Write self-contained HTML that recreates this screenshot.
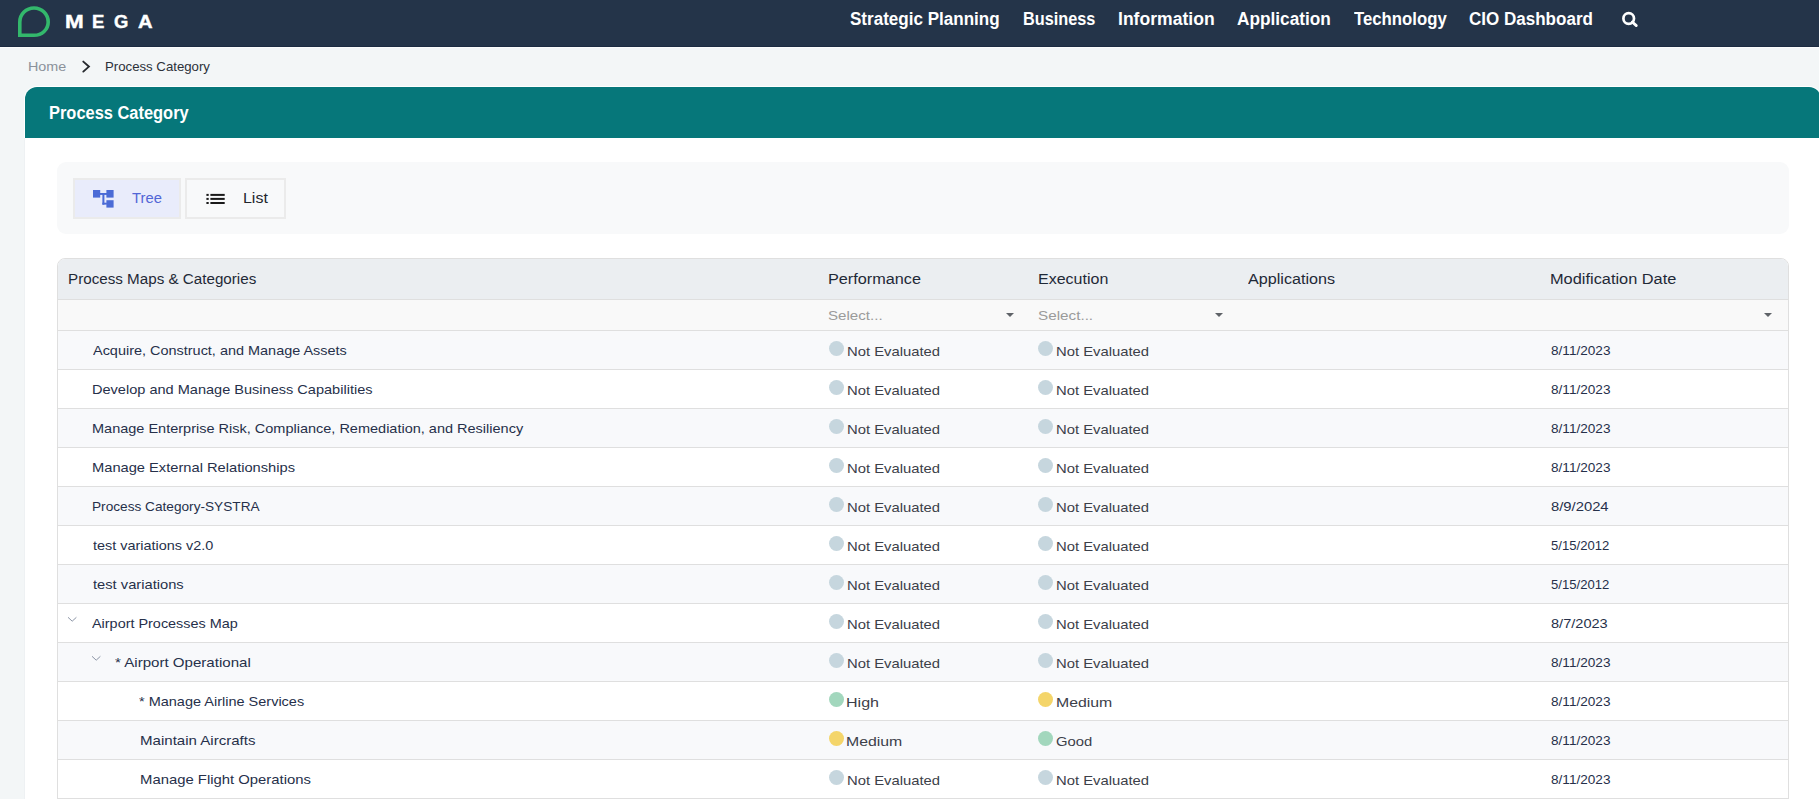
<!DOCTYPE html>
<html><head><meta charset="utf-8">
<style>
*{box-sizing:border-box;margin:0;padding:0}
html,body{width:1819px;height:799px;overflow:hidden;background:#f3f6f7;font-family:"Liberation Sans",sans-serif}
body{position:relative}
.t{position:absolute;white-space:nowrap;transform-origin:0 0}
#nav{position:absolute;left:0;top:0;width:1819px;height:46px;background:#243449}
#navl{position:absolute;left:0;top:46px;width:1819px;height:1px;background:#1c2b41}
#navw{position:absolute;left:0;top:47px;width:1819px;height:1px;background:#fbfcfc}
#card{position:absolute;left:24px;top:86px;width:1798px;height:760px;background:#fff;border-radius:13px 13px 0 0}
#cardhd{position:absolute;left:25px;top:87px;width:1796px;height:51px;background:#06777a;border-radius:12px 12px 0 0}
#toolbar{position:absolute;left:57px;top:162px;width:1732px;height:72px;background:#f8f9fa;border-radius:9px}
.btn{position:absolute;top:178px;height:41px;border:2px solid #ebebeb}
#tbl{position:absolute;left:57px;top:258px;width:1732px;height:560px;border:1px solid #dfdfdf;border-radius:8px 8px 0 0;overflow:hidden;background:#fff}
#thead{position:absolute;left:58px;top:259px;width:1730px;height:40px;background:#ebeef1;border-radius:7px 7px 0 0}
.hl{position:absolute;left:58px;width:1730px;height:1px;background:#dfdfdf}
#filt{position:absolute;left:58px;top:300px;width:1730px;height:30px;background:#f9f9f9}
.rw{position:absolute;left:58px;width:1730px;height:38px}
.dot{position:absolute;width:15px;height:15px;border-radius:50%}
.chev{position:absolute}
.caret{position:absolute;width:0;height:0;border-left:4px solid transparent;border-right:4px solid transparent;border-top:4px solid #5f6368}
</style></head><body>
<div id="nav"></div><div id="navl"></div><div id="navw"></div>
<svg style="position:absolute;left:16px;top:5px" width="36" height="34" viewBox="0 0 36 34">
  <path d="M3.8 30.3 L3.8 17 C3.8 9.2 10.2 3 18 3 C25.8 3 32.2 9.2 32.2 17 C32.2 24.5 26 30.3 18 30.3 Z" fill="none" stroke="#33b86c" stroke-width="3.6" stroke-linejoin="miter"/>
</svg>
<svg style="position:absolute;left:1620px;top:11px" width="20" height="19" viewBox="0 0 20 19"><circle cx="8.7" cy="7.5" r="5.3" fill="none" stroke="#fff" stroke-width="2.7"/><path d="M12.3 11 L16.3 14.6" stroke="#fff" stroke-width="2.8" stroke-linecap="round"/></svg>
<svg style="position:absolute;left:81px;top:60px" width="11" height="14" viewBox="0 0 11 14"><path d="M2.3 1.6 L7.9 6.6 L2.3 11.6" fill="none" stroke="#26292e" stroke-width="1.9" stroke-linecap="round"/></svg>

<div id="card"></div>
<div id="cardhd"></div>
<div style="position:absolute;left:24px;top:138px;width:1px;height:700px;background:#eef1f3"></div>
<div id="toolbar"></div>
<div class="btn" style="left:73px;width:108px;background:#e9ecfb;border-color:#ebebeb"></div>
<div class="btn" style="left:185px;width:101px;background:#f8f9fa"></div>
<svg style="position:absolute;left:93px;top:190px" width="21" height="18" viewBox="0 0 21 18">
  <rect x="0" y="0" width="7.2" height="7.6" fill="#4b6bd6"/>
  <rect x="13.4" y="0" width="7.2" height="7.6" fill="#4b6bd6"/>
  <rect x="13.4" y="10.2" width="7.2" height="7.4" fill="#4b6bd6"/>
  <rect x="7" y="3" width="7" height="1.9" fill="#4b6bd6"/>
  <rect x="9.4" y="3" width="2" height="11.7" fill="#4b6bd6"/>
  <rect x="9.4" y="12.7" width="4.5" height="1.9" fill="#4b6bd6"/>
</svg>
<svg style="position:absolute;left:206px;top:193px" width="19" height="12" viewBox="0 0 19 12">
  <rect x="0.4" y="0.9" width="2.3" height="2" fill="#1a1a1a"/><rect x="0.4" y="4.9" width="2.3" height="2" fill="#1a1a1a"/><rect x="0.4" y="9" width="2.3" height="2" fill="#1a1a1a"/>
  <rect x="4.4" y="0.9" width="14.3" height="2" fill="#1a1a1a"/><rect x="4.4" y="4.9" width="14.3" height="2" fill="#1a1a1a"/><rect x="4.4" y="9" width="14.3" height="2" fill="#1a1a1a"/>
</svg>

<div id="tbl"></div>
<div id="thead"></div>
<div class="hl" style="top:299px"></div>
<div id="filt"></div>
<div class="hl" style="top:330px"></div>
<div class="caret" style="left:1005.5px;top:313px"></div>
<div class="caret" style="left:1214.5px;top:313px"></div>
<div class="caret" style="left:1764px;top:313px"></div>
<div class="rw" style="top:331px;background:#f8f9fb"></div>
<div class="dot" style="left:828.8px;top:341px;background:#c6d6de"></div>
<div class="dot" style="left:1038.0px;top:341px;background:#c6d6de"></div>
<div class="rw" style="top:370px;background:#ffffff"></div>
<div class="dot" style="left:828.8px;top:380px;background:#c6d6de"></div>
<div class="dot" style="left:1038.0px;top:380px;background:#c6d6de"></div>
<div class="rw" style="top:409px;background:#f8f9fb"></div>
<div class="dot" style="left:828.8px;top:419px;background:#c6d6de"></div>
<div class="dot" style="left:1038.0px;top:419px;background:#c6d6de"></div>
<div class="rw" style="top:448px;background:#ffffff"></div>
<div class="dot" style="left:828.8px;top:458px;background:#c6d6de"></div>
<div class="dot" style="left:1038.0px;top:458px;background:#c6d6de"></div>
<div class="rw" style="top:487px;background:#f8f9fb"></div>
<div class="dot" style="left:828.8px;top:497px;background:#c6d6de"></div>
<div class="dot" style="left:1038.0px;top:497px;background:#c6d6de"></div>
<div class="rw" style="top:526px;background:#ffffff"></div>
<div class="dot" style="left:828.8px;top:536px;background:#c6d6de"></div>
<div class="dot" style="left:1038.0px;top:536px;background:#c6d6de"></div>
<div class="rw" style="top:565px;background:#f8f9fb"></div>
<div class="dot" style="left:828.8px;top:575px;background:#c6d6de"></div>
<div class="dot" style="left:1038.0px;top:575px;background:#c6d6de"></div>
<div class="rw" style="top:604px;background:#ffffff"></div>
<div class="dot" style="left:828.8px;top:614px;background:#c6d6de"></div>
<div class="dot" style="left:1038.0px;top:614px;background:#c6d6de"></div>
<svg class="chev" style="left:66.9px;top:615.8px" width="11" height="7" viewBox="0 0 11 7"><path d="M1 1.3 L5.2 5.2 L9.4 1.3" fill="none" stroke="#8c95a6" stroke-width="1"/></svg>
<div class="rw" style="top:643px;background:#f8f9fb"></div>
<div class="dot" style="left:828.8px;top:653px;background:#c6d6de"></div>
<div class="dot" style="left:1038.0px;top:653px;background:#c6d6de"></div>
<svg class="chev" style="left:91.0px;top:654.8px" width="11" height="7" viewBox="0 0 11 7"><path d="M1 1.3 L5.2 5.2 L9.4 1.3" fill="none" stroke="#8c95a6" stroke-width="1"/></svg>
<div class="rw" style="top:682px;background:#ffffff"></div>
<div class="dot" style="left:828.8px;top:692px;background:#a2d7bd"></div>
<div class="dot" style="left:1038.0px;top:692px;background:#f4d56a"></div>
<div class="rw" style="top:721px;background:#f8f9fb"></div>
<div class="dot" style="left:828.8px;top:731px;background:#f4d56a"></div>
<div class="dot" style="left:1038.0px;top:731px;background:#a2d7bd"></div>
<div class="rw" style="top:760px;background:#ffffff"></div>
<div class="dot" style="left:828.8px;top:770px;background:#c6d6de"></div>
<div class="dot" style="left:1038.0px;top:770px;background:#c6d6de"></div>
<div class="hl" style="top:369px"></div>
<div class="hl" style="top:408px"></div>
<div class="hl" style="top:447px"></div>
<div class="hl" style="top:486px"></div>
<div class="hl" style="top:525px"></div>
<div class="hl" style="top:564px"></div>
<div class="hl" style="top:603px"></div>
<div class="hl" style="top:642px"></div>
<div class="hl" style="top:681px"></div>
<div class="hl" style="top:720px"></div>
<div class="hl" style="top:759px"></div>
<div class="hl" style="top:798px"></div>
<div class="t" style="left:849.83px;top:11px;font-size:17.5px;line-height:17.5px;font-weight:bold;color:#fff;transform:scaleX(0.9737);">Strategic Planning</div>
<div class="t" style="left:1022.87px;top:11px;font-size:17.5px;line-height:17.5px;font-weight:bold;color:#fff;transform:scaleX(0.9303);">Business</div>
<div class="t" style="left:1117.80px;top:11px;font-size:17.5px;line-height:17.5px;font-weight:bold;color:#fff;transform:scaleX(1.0043);">Information</div>
<div class="t" style="left:1236.72px;top:11px;font-size:17.5px;line-height:17.5px;font-weight:bold;color:#fff;transform:scaleX(0.9849);">Application</div>
<div class="t" style="left:1353.60px;top:11px;font-size:17.5px;line-height:17.5px;font-weight:bold;color:#fff;transform:scaleX(0.9567);">Technology</div>
<div class="t" style="left:1469.23px;top:11px;font-size:17.5px;line-height:17.5px;font-weight:bold;color:#fff;transform:scaleX(0.9728);">CIO Dashboard</div>
<div class="t" style="left:64.72px;top:14px;font-size:17.5px;line-height:17.5px;font-weight:bold;color:#fff;transform:scaleX(1.2833);-webkit-text-stroke:0.4px #fff;">M</div>
<div class="t" style="left:91.74px;top:14px;font-size:17.5px;line-height:17.5px;font-weight:bold;color:#fff;transform:scaleX(1.0600);-webkit-text-stroke:0.4px #fff;">E</div>
<div class="t" style="left:114.35px;top:14px;font-size:17.5px;line-height:17.5px;font-weight:bold;color:#fff;transform:scaleX(1.0500);-webkit-text-stroke:0.4px #fff;">G</div>
<div class="t" style="left:137.85px;top:14px;font-size:17.5px;line-height:17.5px;font-weight:bold;color:#fff;transform:scaleX(1.1545);-webkit-text-stroke:0.4px #fff;">A</div>
<div class="t" style="left:28.40px;top:60px;font-size:13px;line-height:13px;color:#8b929b;transform:scaleX(1.1030);">Home</div>
<div class="t" style="left:104.88px;top:60px;font-size:13px;line-height:13px;color:#2c3139;transform:scaleX(1.0157);">Process Category</div>
<div class="t" style="left:49.16px;top:105px;font-size:17.5px;line-height:17.5px;font-weight:bold;color:#fff;transform:scaleX(0.9385);">Process Category</div>
<div class="t" style="left:132.40px;top:190px;font-size:15px;line-height:15px;color:#5266d6;transform:scaleX(0.9867);">Tree</div>
<div class="t" style="left:243.14px;top:190px;font-size:15px;line-height:15px;color:#22262c;transform:scaleX(1.0636);">List</div>
<div class="t" style="left:67.72px;top:272px;font-size:14px;line-height:14px;color:#1f2937;transform:scaleX(1.0849);">Process Maps &amp; Categories</div>
<div class="t" style="left:828.14px;top:272px;font-size:14px;line-height:14px;color:#1f2937;transform:scaleX(1.1603);">Performance</div>
<div class="t" style="left:1037.66px;top:272px;font-size:14px;line-height:14px;color:#1f2937;transform:scaleX(1.1433);">Execution</div>
<div class="t" style="left:1248.20px;top:272px;font-size:14px;line-height:14px;color:#1f2937;transform:scaleX(1.1533);">Applications</div>
<div class="t" style="left:1550.43px;top:272px;font-size:14px;line-height:14px;color:#1f2937;transform:scaleX(1.1682);">Modification Date</div>
<div class="t" style="left:828.14px;top:309px;font-size:13px;line-height:13px;color:#9b9b9b;transform:scaleX(1.1622);">Select...</div>
<div class="t" style="left:1037.63px;top:309px;font-size:13px;line-height:13px;color:#9b9b9b;transform:scaleX(1.1733);">Select...</div>
<div class="t" style="left:92.60px;top:344px;font-size:13.5px;line-height:13.5px;color:#26304a;transform:scaleX(1.0705);">Acquire, Construct, and Manage Assets</div>
<div class="t" style="left:846.50px;top:345px;font-size:13.5px;line-height:13.5px;color:#3c4049;transform:scaleX(1.0976);">Not Evaluated</div>
<div class="t" style="left:1056.10px;top:345px;font-size:13.5px;line-height:13.5px;color:#3c4049;transform:scaleX(1.0976);">Not Evaluated</div>
<div class="t" style="left:1550.59px;top:344px;font-size:13.5px;line-height:13.5px;color:#26304a;transform:scaleX(1.0070);">8/11/2023</div>
<div class="t" style="left:91.52px;top:383px;font-size:13.5px;line-height:13.5px;color:#26304a;transform:scaleX(1.0772);">Develop and Manage Business Capabilities</div>
<div class="t" style="left:846.50px;top:384px;font-size:13.5px;line-height:13.5px;color:#3c4049;transform:scaleX(1.0976);">Not Evaluated</div>
<div class="t" style="left:1056.10px;top:384px;font-size:13.5px;line-height:13.5px;color:#3c4049;transform:scaleX(1.0976);">Not Evaluated</div>
<div class="t" style="left:1550.59px;top:383px;font-size:13.5px;line-height:13.5px;color:#26304a;transform:scaleX(1.0070);">8/11/2023</div>
<div class="t" style="left:91.53px;top:422px;font-size:13.5px;line-height:13.5px;color:#26304a;transform:scaleX(1.0740);">Manage Enterprise Risk, Compliance, Remediation, and Resiliency</div>
<div class="t" style="left:846.50px;top:423px;font-size:13.5px;line-height:13.5px;color:#3c4049;transform:scaleX(1.0976);">Not Evaluated</div>
<div class="t" style="left:1056.10px;top:423px;font-size:13.5px;line-height:13.5px;color:#3c4049;transform:scaleX(1.0976);">Not Evaluated</div>
<div class="t" style="left:1550.59px;top:422px;font-size:13.5px;line-height:13.5px;color:#26304a;transform:scaleX(1.0070);">8/11/2023</div>
<div class="t" style="left:91.51px;top:461px;font-size:13.5px;line-height:13.5px;color:#26304a;transform:scaleX(1.0865);">Manage External Relationships</div>
<div class="t" style="left:846.50px;top:462px;font-size:13.5px;line-height:13.5px;color:#3c4049;transform:scaleX(1.0976);">Not Evaluated</div>
<div class="t" style="left:1056.10px;top:462px;font-size:13.5px;line-height:13.5px;color:#3c4049;transform:scaleX(1.0976);">Not Evaluated</div>
<div class="t" style="left:1550.59px;top:461px;font-size:13.5px;line-height:13.5px;color:#26304a;transform:scaleX(1.0070);">8/11/2023</div>
<div class="t" style="left:91.59px;top:500px;font-size:13.5px;line-height:13.5px;color:#26304a;transform:scaleX(1.0109);">Process Category-SYSTRA</div>
<div class="t" style="left:846.50px;top:501px;font-size:13.5px;line-height:13.5px;color:#3c4049;transform:scaleX(1.0976);">Not Evaluated</div>
<div class="t" style="left:1056.10px;top:501px;font-size:13.5px;line-height:13.5px;color:#3c4049;transform:scaleX(1.0976);">Not Evaluated</div>
<div class="t" style="left:1550.50px;top:500px;font-size:13.5px;line-height:13.5px;color:#26304a;transform:scaleX(1.0961);">8/9/2024</div>
<div class="t" style="left:92.60px;top:539px;font-size:13.5px;line-height:13.5px;color:#26304a;transform:scaleX(1.0696);">test variations v2.0</div>
<div class="t" style="left:846.50px;top:540px;font-size:13.5px;line-height:13.5px;color:#3c4049;transform:scaleX(1.0976);">Not Evaluated</div>
<div class="t" style="left:1056.10px;top:540px;font-size:13.5px;line-height:13.5px;color:#3c4049;transform:scaleX(1.0976);">Not Evaluated</div>
<div class="t" style="left:1550.63px;top:539px;font-size:13.5px;line-height:13.5px;color:#26304a;transform:scaleX(0.9707);">5/15/2012</div>
<div class="t" style="left:92.60px;top:578px;font-size:13.5px;line-height:13.5px;color:#26304a;transform:scaleX(1.0892);">test variations</div>
<div class="t" style="left:846.50px;top:579px;font-size:13.5px;line-height:13.5px;color:#3c4049;transform:scaleX(1.0976);">Not Evaluated</div>
<div class="t" style="left:1056.10px;top:579px;font-size:13.5px;line-height:13.5px;color:#3c4049;transform:scaleX(1.0976);">Not Evaluated</div>
<div class="t" style="left:1550.63px;top:578px;font-size:13.5px;line-height:13.5px;color:#26304a;transform:scaleX(0.9707);">5/15/2012</div>
<div class="t" style="left:92.30px;top:617px;font-size:13.5px;line-height:13.5px;color:#26304a;transform:scaleX(1.0676);">Airport Processes Map</div>
<div class="t" style="left:846.50px;top:618px;font-size:13.5px;line-height:13.5px;color:#3c4049;transform:scaleX(1.0976);">Not Evaluated</div>
<div class="t" style="left:1056.10px;top:618px;font-size:13.5px;line-height:13.5px;color:#3c4049;transform:scaleX(1.0976);">Not Evaluated</div>
<div class="t" style="left:1550.52px;top:617px;font-size:13.5px;line-height:13.5px;color:#26304a;transform:scaleX(1.0784);">8/7/2023</div>
<div class="t" style="left:114.78px;top:656px;font-size:13.5px;line-height:13.5px;color:#26304a;transform:scaleX(1.1167);">* Airport Operational</div>
<div class="t" style="left:846.50px;top:657px;font-size:13.5px;line-height:13.5px;color:#3c4049;transform:scaleX(1.0976);">Not Evaluated</div>
<div class="t" style="left:1056.10px;top:657px;font-size:13.5px;line-height:13.5px;color:#3c4049;transform:scaleX(1.0976);">Not Evaluated</div>
<div class="t" style="left:1550.59px;top:656px;font-size:13.5px;line-height:13.5px;color:#26304a;transform:scaleX(1.0070);">8/11/2023</div>
<div class="t" style="left:139.13px;top:695px;font-size:13.5px;line-height:13.5px;color:#26304a;transform:scaleX(1.0737);">* Manage Airline Services</div>
<div class="t" style="left:846.41px;top:696px;font-size:13.5px;line-height:13.5px;color:#3c4049;transform:scaleX(1.1885);">High</div>
<div class="t" style="left:1056.03px;top:696px;font-size:13.5px;line-height:13.5px;color:#3c4049;transform:scaleX(1.1717);">Medium</div>
<div class="t" style="left:1550.59px;top:695px;font-size:13.5px;line-height:13.5px;color:#26304a;transform:scaleX(1.0070);">8/11/2023</div>
<div class="t" style="left:139.58px;top:734px;font-size:13.5px;line-height:13.5px;color:#26304a;transform:scaleX(1.1157);">Maintain Aircrafts</div>
<div class="t" style="left:846.43px;top:735px;font-size:13.5px;line-height:13.5px;color:#3c4049;transform:scaleX(1.1717);">Medium</div>
<div class="t" style="left:1056.10px;top:735px;font-size:13.5px;line-height:13.5px;color:#3c4049;transform:scaleX(1.0968);">Good</div>
<div class="t" style="left:1550.59px;top:734px;font-size:13.5px;line-height:13.5px;color:#26304a;transform:scaleX(1.0070);">8/11/2023</div>
<div class="t" style="left:139.60px;top:773px;font-size:13.5px;line-height:13.5px;color:#26304a;transform:scaleX(1.1006);">Manage Flight Operations</div>
<div class="t" style="left:846.50px;top:774px;font-size:13.5px;line-height:13.5px;color:#3c4049;transform:scaleX(1.0976);">Not Evaluated</div>
<div class="t" style="left:1056.10px;top:774px;font-size:13.5px;line-height:13.5px;color:#3c4049;transform:scaleX(1.0976);">Not Evaluated</div>
<div class="t" style="left:1550.59px;top:773px;font-size:13.5px;line-height:13.5px;color:#26304a;transform:scaleX(1.0070);">8/11/2023</div>
</body></html>
